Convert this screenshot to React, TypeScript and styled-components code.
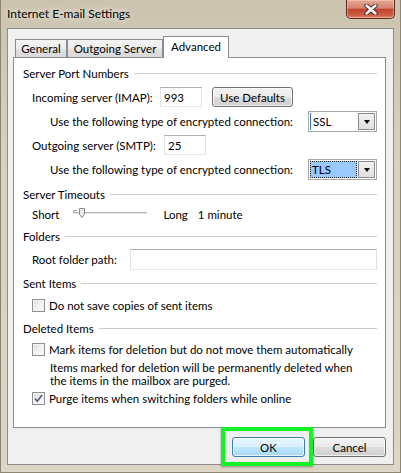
import styled, { createGlobalStyle } from 'styled-components'

const GlobalStyle = createGlobalStyle`
  html, body { margin: 0; padding: 0; }
  body {
    width: 401px;
    height: 473px;
    overflow: hidden;
    font-family: Lato, "Liberation Sans", Arial, sans-serif;
    font-size: 11.5px;
    color: #000;
  }
  * { box-sizing: border-box; }
`

const Window = styled.div`
  width: 401px;
  height: 473px;
  display: flex;
  flex-direction: column;
  background: linear-gradient(180deg, #cbc3ae 0%, #d8d1bf 35%, #ddd6c6 100%);
  box-shadow: inset 1px 0 0 #8d8571, inset -1px 0 0 #8d8571, inset 0 -1px 0 #8d8571;
`

const TitleBar = styled.div`
  height: 28px;
  flex: none;
  display: flex;
  align-items: flex-start;
  padding-left: 7px;
`

const Title = styled.div`
  margin-top: 6px;
  line-height: 16px;
  font-size: 12px;
  color: #000;
  text-shadow: 0 0 6px rgba(255, 255, 255, 0.8), 0 0 10px rgba(255, 255, 255, 0.6);
`

const CloseButton = styled.div`
  margin-left: auto;
  margin-right: 6px;
  width: 49px;
  height: 19px;
  display: flex;
  align-items: center;
  justify-content: center;
  border: 1px solid #5c2a22;
  border-top: none;
  border-radius: 0 0 5px 5px;
  background: linear-gradient(180deg, #e6a797 0%, #d6826f 45%, #c2432e 52%, #cf5d45 85%, #e08a6e 100%);
  box-shadow: inset 0 0 0 1px rgba(255, 220, 200, 0.45);
`

const Client = styled.div`
  flex: 1;
  margin: 0 7px 8px;
  border: 1px solid #8c8c8c;
  background: #f0f0f0;
  padding: 7px 7px 7px 5px;
  display: flex;
  flex-direction: column;
`

const TabStrip = styled.div`
  height: 22px;
  margin-bottom: -1px;
  padding-left: 2px;
  display: flex;
  align-items: flex-end;
  position: relative;
  z-index: 1;
`

const Tab = styled.div<{ $active?: boolean; $w: number }>`
  width: ${(p) => p.$w}px;
  display: flex;
  justify-content: center;
  align-items: ${(p) => (p.$active ? 'flex-start' : 'center')};
  padding-top: ${(p) => (p.$active ? '3px' : '0')};
  height: ${(p) => (p.$active ? '22px' : '18px')};
  margin-bottom: ${(p) => (p.$active ? '0' : '1px')};
  border: 1px solid #898c95;
  border-bottom: none;
  background: ${(p) =>
    p.$active ? '#fff' : 'linear-gradient(180deg, #f4f4f4 0%, #ececec 50%, #e1e1e1 51%, #d9d9d9 100%)'};
`

const Panel = styled.div`
  height: 371px;
  flex: none;
  border: 1px solid #898c95;
  background: #fff;
  padding: 0 8px 0 9px;
  display: flex;
  flex-direction: column;
`

const GroupHeader = styled.div<{ $mt: number }>`
  display: flex;
  align-items: center;
  height: 16px;
  margin-top: ${(p) => p.$mt}px;
  &::after {
    content: '';
    flex: 1;
    height: 1px;
    margin-left: 5px;
    background: #c9ced3;
  }
`

const Row = styled.div<{ $mt: number; $indent?: number; $h?: number }>`
  display: flex;
  align-items: center;
  height: ${(p) => p.$h ?? 20}px;
  margin-top: ${(p) => p.$mt}px;
  padding-left: ${(p) => p.$indent ?? 9}px;
`

const Label = styled.span<{ $w: number }>`
  width: ${(p) => p.$w}px;
  flex: none;
  white-space: nowrap;
`

const TextBox = styled.div<{ $w?: number; $h?: number }>`
  height: ${(p) => p.$h ?? 20}px;
  ${(p) => (p.$w ? `width: ${p.$w}px;` : 'flex: 1;')}
  border: 1px solid;
  border-color: #abadb3 #dbdfe6 #e3e9ef #e2e3ea;
  background: #fff;
  padding-left: 3px;
  display: flex;
  align-items: center;
`

const PushButton = styled.div<{ $default?: boolean; $w: number; $ml?: number }>`
  width: ${(p) => p.$w}px;
  height: 20px;
  margin-left: ${(p) => p.$ml ?? 0}px;
  display: flex;
  align-items: center;
  justify-content: center;
  border: 1px solid ${(p) => (p.$default ? '#3c7fb1' : '#707070')};
  border-radius: 3px;
  background: ${(p) =>
    p.$default
      ? 'linear-gradient(180deg, #eaf6fd 0%, #d9f0fc 50%, #bee6fd 51%, #a7d9f5 100%)'
      : 'linear-gradient(180deg, #f2f2f2 0%, #ebebeb 50%, #dddddd 51%, #cfcfcf 100%)'};
  box-shadow: inset 0 0 0 1px rgba(255, 255, 255, 0.7);
`

const Combo = styled.div`
  margin-left: auto;
  width: 69px;
  height: 21px;
  border: 1px solid #a9a9a9;
  background: #fff;
  display: flex;
  align-items: stretch;
  padding: 1px;
`

const ComboText = styled.div<{ $selected?: boolean }>`
  flex: 1;
  display: flex;
  align-items: center;
  padding-left: 2px;
  margin-right: 1px;
  background: ${(p) => (p.$selected ? '#99c9ff' : 'transparent')};
  outline: ${(p) => (p.$selected ? '1px dotted #222' : 'none')};
  outline-offset: -1px;
  border-left: ${(p) => (p.$selected ? 'none' : '1px solid #3a72c4')};
`

const ComboArrow = styled.div`
  width: 17px;
  display: flex;
  align-items: center;
  justify-content: center;
  border: 1px solid #8a8a8a;
  background: linear-gradient(180deg, #f1f1f1 0%, #e0e0e0 100%);
  &::before {
    content: '';
    border-left: 3.5px solid transparent;
    border-right: 3.5px solid transparent;
    border-top: 4px solid #000;
  }
`

const Box = styled.span`
  width: 13px;
  height: 13px;
  flex: none;
  border: 1px solid #8e8f8f;
  background: linear-gradient(135deg, #d7dade 0%, #eef0f2 50%, #fdfdfd 100%);
  box-shadow: inset 0 0 0 1px #f4f4f4;
  margin-right: 4px;
  display: flex;
  align-items: center;
  justify-content: center;
`

const Description = styled.div`
  margin-top: 4px;
  padding-left: 27px;
  line-height: 13px;
`

const Spacer = styled.span<{ $w: number }>`
  display: inline-block;
  width: ${(p) => p.$w}px;
  flex: none;
`

const ButtonRow = styled.div`
  margin-top: 9px;
  height: 20px;
  display: flex;
  justify-content: flex-end;
  gap: 8px;
`

const HighlightWrap = styled.div`
  position: relative;
`

const Highlight = styled.div`
  position: absolute;
  left: -11px;
  top: -10px;
  width: 92px;
  height: 39px;
  border: 4px solid #12f426;
  box-shadow: 0 1px 2px rgba(0, 0, 0, 0.35), inset 0 0 1px rgba(0, 0, 0, 0.3);
  pointer-events: none;
`

const Checkbox = ({ checked }: { checked?: boolean }) => (
  <Box>
    {checked && (
      <svg width="9" height="9" viewBox="0 0 9 9">
        <path d="M1 4.5 L3.3 7.2 L8 1" fill="none" stroke="#4a5c86" strokeWidth="1.6" />
      </svg>
    )}
  </Box>
)

const Slider = () => (
  <svg width="75" height="12" viewBox="0 0 75 12" style={{ marginLeft: 14 }}>
    <rect x="0" y="4" width="74" height="1" fill="#b4b4b4" />
    <rect x="0" y="5" width="74" height="1" fill="#e6e6e6" />
    <path d="M0.5 4 V2.5 H4" fill="none" stroke="#a8a8a8" strokeWidth="1" />
    <path d="M6.5 0.5 H11.5 V6.5 L9 9.5 L6.5 6.5 Z" fill="#ececec" stroke="#8c8c8c" strokeWidth="1" />
  </svg>
)

const CloseGlyph = () => (
  <svg width="14" height="11" viewBox="0 0 14 11">
    <path d="M2.5 1.5 L11.5 9.5 M11.5 1.5 L2.5 9.5" stroke="#4a2a24" strokeWidth="4.4" strokeLinecap="round" />
    <path d="M2.5 1.5 L11.5 9.5 M11.5 1.5 L2.5 9.5" stroke="#fff" strokeWidth="2.4" strokeLinecap="round" />
  </svg>
)

const App = () => {
  return (
    <>
      <GlobalStyle />
      <Window>
        <TitleBar>
          <Title>Internet E-mail Settings</Title>
          <CloseButton>
            <CloseGlyph />
          </CloseButton>
        </TitleBar>
        <Client>
          <TabStrip>
            <Tab $w={52}>General</Tab>
            <Tab $w={96}>Outgoing Server</Tab>
            <Tab $w={66} $active>
              Advanced
            </Tab>
          </TabStrip>
          <Panel>
            <GroupHeader $mt={7}>Server Port Numbers</GroupHeader>
            <Row $mt={6}>
              <Label $w={128}>Incoming server (IMAP):</Label>
              <TextBox $w={42}>993</TextBox>
              <PushButton $w={81} $ml={10}>
                Use Defaults
              </PushButton>
            </Row>
            <Row $mt={4} $indent={27} $h={21}>
              Use the following type of encrypted connection:
              <Combo>
                <ComboText>SSL</ComboText>
                <ComboArrow />
              </Combo>
            </Row>
            <Row $mt={3}>
              <Label $w={132}>Outgoing server (SMTP):</Label>
              <TextBox $w={42}>25</TextBox>
            </Row>
            <Row $mt={4} $indent={27} $h={21}>
              Use the following type of encrypted connection:
              <Combo>
                <ComboText $selected>TLS</ComboText>
                <ComboArrow />
              </Combo>
            </Row>

            <GroupHeader $mt={6}>Server Timeouts</GroupHeader>
            <Row $mt={2}>
              Short
              <Slider />
              <Spacer $w={15} />
              Long
              <Spacer $w={10} />1 minute
            </Row>

            <GroupHeader $mt={4}>Folders</GroupHeader>
            <Row $mt={5} $h={21}>
              <Label $w={98}>Root folder path:</Label>
              <TextBox $h={21} />
            </Row>

            <GroupHeader $mt={5}>Sent Items</GroupHeader>
            <Row $mt={6} $h={16}>
              <Checkbox />
              Do not save copies of sent items
            </Row>

            <GroupHeader $mt={7}>Deleted Items</GroupHeader>
            <Row $mt={5} $h={16}>
              <Checkbox />
              Mark items for deletion but do not move them automatically
            </Row>
            <Description>
              Items marked for deletion will be permanently deleted when
              <br />
              the items in the mailbox are purged.
            </Description>
            <Row $mt={3} $h={16}>
              <Checkbox checked />
              Purge items when switching folders while online
            </Row>
          </Panel>
          <ButtonRow>
            <HighlightWrap>
              <PushButton $default $w={73}>
                OK
              </PushButton>
              <Highlight />
            </HighlightWrap>
            <PushButton $w={73}>Cancel</PushButton>
          </ButtonRow>
        </Client>
      </Window>
    </>
  )
}

export default App
